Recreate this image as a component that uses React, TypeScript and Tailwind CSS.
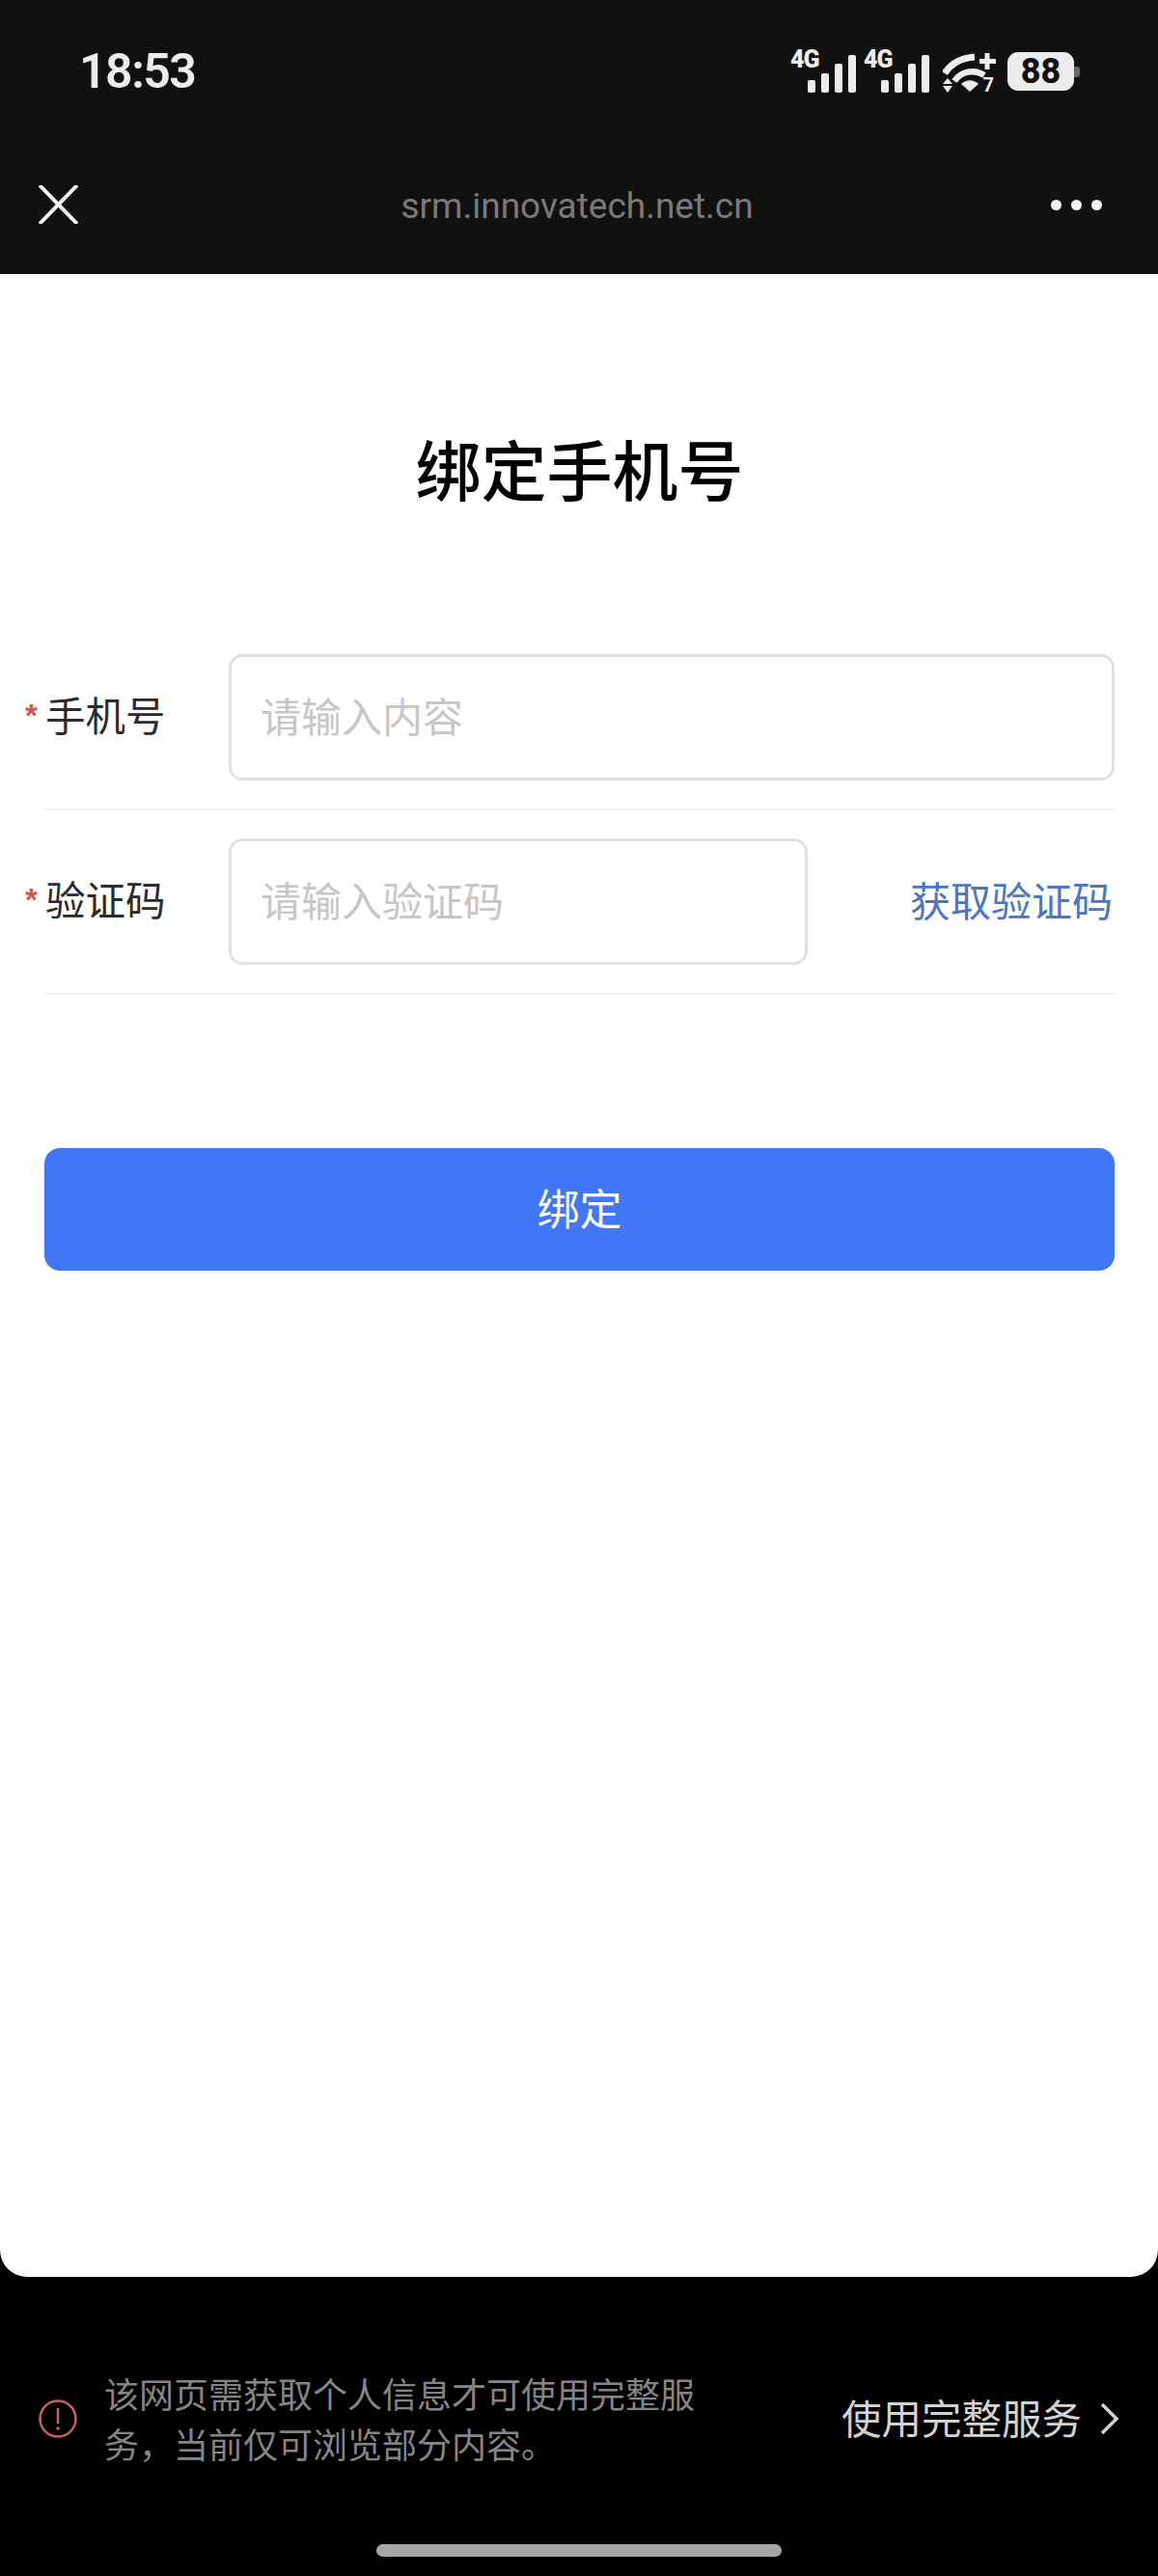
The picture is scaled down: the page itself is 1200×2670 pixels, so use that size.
import React from 'react';

const CJK = "font-['Noto_Sans_CJK_SC','Noto_Sans',sans-serif]";

const SignalIcon: React.FC = () => (
    <div className="relative w-[68px] h-[44px]">
        <span className="absolute left-0 top-0 font-['Roboto',sans-serif] font-black text-[25px] leading-[20px] tracking-[-1px] text-[#ececec]">4G</span>
        <svg width="68" height="44" viewBox="0 0 68 44" fill="#ececec" className="block">
            <rect x="18" y="31" width="8" height="13" rx="2" />
            <rect x="32" y="24" width="8" height="20" rx="2" />
            <rect x="46" y="14" width="8" height="30" rx="2" />
            <rect x="60" y="5" width="8" height="39" rx="2" />
        </svg>
    </div>
);

const WifiIcon: React.FC = () => (
    <div className="relative w-[55px] h-[44px]">
        <svg width="55" height="44" viewBox="0 0 55 44" fill="none" className="block">
            <path d="M2 24 C9 13 20 8 33 7" stroke="#ececec" strokeWidth="7" />
            <path d="M12 32 C19 22 32 19 43 26" stroke="#ececec" strokeWidth="6.5" />
            <path d="M19 35 C25 30 31 30 37 35 L28 43 Z" fill="#ececec" />
            <path d="M0 35 L5 29 L10 35 Z M0 37 L10 37 L5 44 Z" fill="#ececec" />
            <path d="M46 3 V20 M38 11.5 H55" stroke="#ececec" strokeWidth="5" />
        </svg>
        <span className="absolute right-[2px] bottom-0 font-['Roboto',sans-serif] font-bold text-[20px] leading-[15px] text-[#ececec]">7</span>
    </div>
);

const BatteryIcon: React.FC<{ level: number }> = ({ level }) => (
    <div className="flex items-center">
        <div className="w-[69px] h-[40px] rounded-[11px] bg-[#ececec] flex items-center justify-center font-['Roboto',sans-serif] font-extrabold text-[36px] leading-none text-[#111]">
            {level}
        </div>
        <div className="w-[6px] h-[11px] rounded-r-[3px] bg-[#666666]" />
    </div>
);

const FormRow: React.FC<{ label: string; placeholder: string; inputWidth: string; children?: React.ReactNode }> = ({ label, placeholder, inputWidth, children }) => (
    <div className="flex items-center pt-[29px] pb-[29px] border-b-2 border-[#f1f1f1]">
        <label className={`flex items-center w-[211px] -ml-[20px] pb-[6px] shrink-0 text-[41.5px] leading-none text-[#2b2b2b] ${CJK}`}>
            <span className="w-[21px] text-[33px] font-bold text-[#d9534f] font-['Liberation_Sans',sans-serif] mt-[1px]">*</span>
            {label}
        </label>
        <input
            placeholder={placeholder}
            className={`${inputWidth} h-[131px] pl-[30px] pr-[30px] pb-[6px] border-[3px] border-[#e0e0e0] rounded-[14px] bg-white text-[42px] outline-none placeholder:text-[#c6c6c6] ${CJK}`}
        />
        {children}
    </div>
);

export default function App() {
    return (
        <div className="w-[1200px] h-[2670px] flex flex-col bg-black overflow-hidden">
            <header className="h-[284px] shrink-0 bg-[#111111]">
                <div className="flex items-center justify-between h-[146px] pl-[82px] pr-[81px] pt-[2px]">
                    <span className="font-['Roboto',sans-serif] font-semibold text-[50px] leading-none text-[#ececec] tracking-[-1.5px]">18:53</span>
                    <div className="flex items-center">
                        <SignalIcon />
                        <div className="ml-[8px]"><SignalIcon /></div>
                        <div className="ml-[14px]"><WifiIcon /></div>
                        <div className="ml-[12px]"><BatteryIcon level={88} /></div>
                    </div>
                </div>
                <div className="flex items-center justify-between h-[132px] pl-[40px] pr-[58px]">
                    <svg width="41" height="40" viewBox="0 0 41 40" fill="none" stroke="#f2f2f2" strokeWidth="4" className="block">
                        <path d="M1 0 L40 40 M40 0 L1 40" />
                    </svg>
                    <span className="ml-[26px] pt-[2px] font-['Roboto',sans-serif] text-[37px] leading-none text-[#7a7a7a]">srm.innovatech.net.cn</span>
                    <div className="flex items-center gap-[10px]">
                        <span className="w-[11px] h-[11px] rounded-full bg-[#f2f2f2]" />
                        <span className="w-[11px] h-[11px] rounded-full bg-[#f2f2f2]" />
                        <span className="w-[11px] h-[11px] rounded-full bg-[#f2f2f2]" />
                    </div>
                </div>
            </header>

            <main className="h-[2076px] shrink-0 bg-white rounded-b-[28px] pl-[46px] pr-[45px] pt-[151px]">
                <h1 className={`text-center text-[68px] leading-[100px] font-medium text-black ${CJK}`}>绑定手机号</h1>
                <form className="mt-[114px]">
                    <FormRow label="手机号" placeholder="请输入内容" inputWidth="w-[918px]" />
                    <FormRow label="验证码" placeholder="请输入验证码" inputWidth="w-[600px]">
                        <button type="button" className={`ml-auto pr-[2px] pb-[6px] text-[42px] leading-none text-[#4a76c4] ${CJK}`}>获取验证码</button>
                    </FormRow>
                    <button type="button" className={`w-full h-[127px] mt-[159px] pb-[5px] rounded-[16px] bg-[#4176f5] text-white text-[44px] leading-none ${CJK}`}>绑定</button>
                </form>
            </main>

            <footer className="flex-1 flex flex-col">
                <div className="flex items-center h-[110px] mt-[92px] pl-[40px] pr-[41px]">
                    <svg width="40" height="40" viewBox="0 0 40 40" fill="none" className="block shrink-0 mr-[28px]">
                        <circle cx="20" cy="20" r="18.5" stroke="#c9605c" strokeWidth="2.5" />
                        <path d="M20 9 V25" stroke="#c9605c" strokeWidth="2.5" />
                        <circle cx="20" cy="30" r="1.8" fill="#c9605c" />
                    </svg>
                    <p className={`w-[620px] pb-[3px] text-[36px] leading-[52px] text-[#858585] ${CJK}`}>该网页需获取个人信息才可使用完整服务，当前仅可浏览部分内容。</p>
                    <div className="ml-auto flex items-center gap-[19px]">
                        <span className={`pb-[2px] text-[41.5px] leading-none text-[#d2d2d2] ${CJK}`}>使用完整服务</span>
                        <svg width="19" height="32" viewBox="0 0 19 32" fill="none" stroke="#d2d2d2" strokeWidth="3.5" className="block">
                            <path d="M2 1 L17 16 L2 31" />
                        </svg>
                    </div>
                </div>
                <div className="w-[420px] h-[13px] mt-[75px] mx-auto rounded-full bg-[#a6a6a6]" />
            </footer>
        </div>
    );
}
